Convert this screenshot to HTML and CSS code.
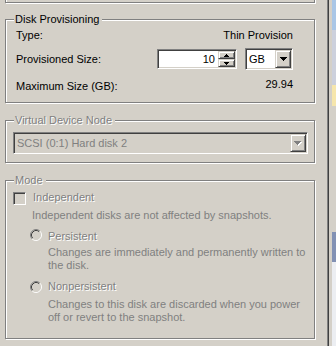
FILE: index.html
```html
<!DOCTYPE html>
<html>
<head>
<meta charset="utf-8">
<link rel="stylesheet" href="styles.css">
</head>
<body>
<div class="screen">
  <div class="dialog">
    <div class="group group-prev"></div>

    <div class="group group-disk">
      <span class="legend">Disk Provisioning</span>
      <div class="row row-type">
        <span class="label">Type:</span>
        <span class="value">Thin Provision</span>
      </div>
      <div class="row row-size">
        <span class="label">Provisioned Size:</span>
        <div class="spin-edit">
          <span class="edit-text">10</span>
          <div class="spinner">
            <div class="btn3d spin-btn">
              <svg width="5" height="3" viewBox="0 0 5 3" shape-rendering="crispEdges"><rect x="2" y="0" width="1" height="1"/><rect x="1" y="1" width="3" height="1"/><rect x="0" y="2" width="5" height="1"/></svg>
            </div>
            <div class="btn3d spin-btn">
              <svg width="5" height="3" viewBox="0 0 5 3" shape-rendering="crispEdges"><rect x="0" y="0" width="5" height="1"/><rect x="1" y="1" width="3" height="1"/><rect x="2" y="2" width="1" height="1"/></svg>
            </div>
          </div>
        </div>
        <div class="combo combo-unit">
          <span class="combo-text">GB</span>
          <div class="btn3d combo-btn">
            <svg width="7" height="4" viewBox="0 0 7 4" shape-rendering="crispEdges"><rect x="0" y="0" width="7" height="1"/><rect x="1" y="1" width="5" height="1"/><rect x="2" y="2" width="3" height="1"/><rect x="3" y="3" width="1" height="1"/></svg>
          </div>
        </div>
      </div>
      <div class="row row-max">
        <span class="label label-max">Maximum Size (GB):</span>
        <span class="value">29.94</span>
      </div>
    </div>

    <div class="group group-vdn">
      <span class="legend etched">Virtual Device Node</span>
      <div class="combo combo-disabled">
        <span class="combo-text">SCSI (0:1) Hard disk 2</span>
        <div class="btn3d combo-btn">
          <svg width="8" height="5" viewBox="0 0 8 5" shape-rendering="crispEdges">
            <g fill="#fff"><rect x="1" y="1" width="7" height="1"/><rect x="2" y="2" width="5" height="1"/><rect x="3" y="3" width="3" height="1"/><rect x="4" y="4" width="1" height="1"/></g>
            <g fill="#808080"><rect x="0" y="0" width="7" height="1"/><rect x="1" y="1" width="5" height="1"/><rect x="2" y="2" width="3" height="1"/><rect x="3" y="3" width="1" height="1"/></g>
          </svg>
        </div>
      </div>
    </div>

    <div class="group group-mode">
      <span class="legend etched">Mode</span>
      <div class="check-row">
        <span class="checkbox"></span>
        <span class="etched">Independent</span>
      </div>
      <p class="hint hint-indep">Independent disks are not affected by snapshots.</p>

      <div class="radio-row radio-persist">
        <svg class="radio" width="12" height="12" viewBox="0 0 12 12">
          <circle cx="6" cy="6" r="5" fill="#d4d0c8"/>
          <path d="M2.11 9.89 A5.5 5.5 0 0 1 9.89 2.11" fill="none" stroke="#808080"/>
          <path d="M9.89 2.11 A5.5 5.5 0 0 1 2.11 9.89" fill="none" stroke="#fff"/>
          <path d="M2.82 9.18 A4.5 4.5 0 0 1 9.18 2.82" fill="none" stroke="#404040"/>
          <path d="M9.18 2.82 A4.5 4.5 0 0 1 2.82 9.18" fill="none" stroke="#d4d0c8"/>
        </svg>
        <span class="etched">Persistent</span>
      </div>
      <p class="hint hint-opt">Changes are immediately and permanently written to<br>the disk.</p>

      <div class="radio-row radio-nonpersist">
        <svg class="radio" width="12" height="12" viewBox="0 0 12 12">
          <circle cx="6" cy="6" r="5" fill="#d4d0c8"/>
          <path d="M2.11 9.89 A5.5 5.5 0 0 1 9.89 2.11" fill="none" stroke="#808080"/>
          <path d="M9.89 2.11 A5.5 5.5 0 0 1 2.11 9.89" fill="none" stroke="#fff"/>
          <path d="M2.82 9.18 A4.5 4.5 0 0 1 9.18 2.82" fill="none" stroke="#404040"/>
          <path d="M9.18 2.82 A4.5 4.5 0 0 1 2.82 9.18" fill="none" stroke="#d4d0c8"/>
        </svg>
        <span class="etched">Nonpersistent</span>
      </div>
      <p class="hint hint-opt hint-last">Changes to this disk are discarded when you power<br>off or revert to the snapshot.</p>
    </div>
  </div>
  <div class="frame-edge"></div>
  <div class="desktop-strip">
    <div class="seg seg-blue"></div>
    <div class="seg seg-lav"></div>
    <div class="seg seg-yellow"></div>
    <div class="seg seg-grey"></div>
    <div class="seg seg-title"></div>
    <div class="seg seg-white"></div>
  </div>
</div>
</body>
</html>
```
FILE: styles.css
```css
html, body {
  margin: 0;
  padding: 0;
}
body {
  background: #d4d0c8;
  font-family: "Liberation Sans", Arial, sans-serif;
  font-size: 11px;
  line-height: 13px;
  color: #000;
  overflow: hidden;
}
.screen {
  display: flex;
  width: 336px;
  height: 346px;
  overflow: hidden;
}
.dialog {
  flex: none;
  width: 327px;
  background: #d4d0c8;
}
.frame-edge {
  flex: none;
  width: 2px;
  box-sizing: border-box;
  border-left: 1px solid #808080;
  border-right: 1px solid #404040;
}
.desktop-strip {
  flex: 1;
  display: flex;
  flex-direction: column;
  border-left: 3px solid #d4d0c8;
}
.seg { flex: none; }
.seg-blue { height: 30px; background: #a9c6e6; }
.seg-lav { height: 55px; background: #ccd0dc; }
.seg-yellow { height: 21px; background: #f6e6ac; }
.seg-grey { height: 126px; background: #d4d0c8; }
.seg-title { height: 30px; background: #8291b4; }
.seg-white { flex: 1; background: #eceef2; }

/* group boxes */
.group {
  position: relative;
  box-sizing: border-box;
  width: 310px;
  margin-left: 5px;
  border: 1px solid #808080;
  box-shadow: inset 1px 1px 0 #fff, 1px 1px 0 #fff;
}
.group-prev {
  height: 20px;
  margin-top: -17px;
}
.group-disk {
  height: 84px;
  margin-top: 16px;
  padding: 9px 21px 0 10px;
}
.group-vdn {
  height: 43px;
  margin-top: 17px;
  padding: 11px 6px 0 7px;
}
.group-mode {
  height: 159px;
  margin-top: 17px;
  padding: 10px 0 0 7px;
}
.legend {
  position: absolute;
  top: -7px;
  left: 8px;
  padding: 0 3px 0 1px;
  background: #d4d0c8;
  white-space: nowrap;
}
.etched {
  color: #808080;
  text-shadow: 1px 1px 0 #fff;
}

/* rows */
.row {
  display: flex;
  align-items: center;
}
.label { flex: 1; white-space: nowrap; }
.value { white-space: nowrap; }
.row-type { height: 13px; }
.row-size { height: 22px; margin-top: 6px; }
.row-max { margin-top: 8px; align-items: flex-start; }
.label-max { padding-top: 2px; }

/* 3d bits */
.sunken {
  border: 1px solid;
}
.btn3d {
  box-sizing: border-box;
  display: flex;
  align-items: center;
  justify-content: center;
  background: #d4d0c8;
  border: 1px solid;
  border-color: #d4d0c8 #404040 #404040 #d4d0c8;
  box-shadow: inset 1px 1px 0 #fff, inset -1px -1px 0 #808080;
}

/* spin edit */
.spin-edit {
  flex: none;
  box-sizing: border-box;
  width: 80px;
  height: 20px;
  padding: 1px;
  display: flex;
  align-items: center;
  background: #fff;
  border: 1px solid;
  border-color: #808080 #fff #fff #808080;
  box-shadow: inset 1px 1px 0 #404040, inset -1px -1px 0 #d4d0c8;
}
.edit-text {
  flex: 1;
  text-align: right;
  padding-right: 3px;
}
.spinner {
  flex: none;
  width: 17px;
  height: 16px;
  display: flex;
  flex-direction: column;
}
.spin-btn {
  width: 17px;
  height: 8px;
}
.spin-btn svg { display: block; }

/* combo boxes */
.combo {
  flex: none;
  box-sizing: border-box;
  height: 22px;
  padding: 1px;
  display: flex;
  align-items: center;
  border: 1px solid;
  border-color: #808080 #fff #fff #808080;
  box-shadow: inset 1px 1px 0 #404040, inset -1px -1px 0 #d4d0c8;
}
.combo-unit {
  width: 48px;
  margin-left: 8px;
  background: #fff;
}
.combo-text {
  flex: 1;
  padding-left: 2px;
  white-space: nowrap;
}
.combo-btn {
  flex: none;
  width: 16px;
  height: 18px;
}
.combo-btn svg { display: block; }
.combo-disabled {
  width: 295px;
  background: #d4d0c8;
  color: #808080;
}

/* mode */
.check-row {
  display: flex;
  align-items: flex-start;
}
.checkbox {
  flex: none;
  box-sizing: border-box;
  width: 13px;
  height: 13px;
  margin-top: 1px;
  margin-right: 7px;
  background: #d4d0c8;
  border: 1px solid;
  border-color: #808080 #fff #fff #808080;
  box-shadow: inset 1px 1px 0 #404040, inset -1px -1px 0 #d4d0c8;
}
.hint {
  margin: 0;
  color: #808080;
  white-space: nowrap;
}
.hint-indep { margin: 4px 0 0 19px; }
.radio-row {
  display: flex;
  align-items: flex-start;
  margin-left: 17px;
}
.radio {
  flex: none;
  display: block;
  margin-right: 6px;
}
.radio-persist { margin-top: 7px; }
.radio-persist .etched { margin-top: 1px; }
.radio-nonpersist { margin-top: 8px; }
.radio-nonpersist .radio { margin-top: 1px; }
.hint-opt { margin: 3px 0 0 35px; }
.hint-last { margin-top: 5px; }
```
